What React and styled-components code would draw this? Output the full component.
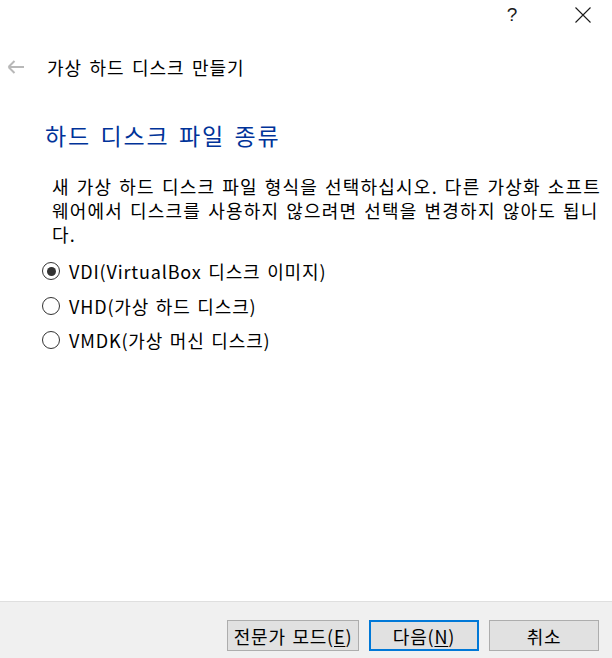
import React from "react";
import styled, { createGlobalStyle } from "styled-components";

const Global = createGlobalStyle`
  html, body { margin: 0; padding: 0; background: #ffffff; }
  body { font-family: "Noto Sans CJK KR", "Noto Sans", sans-serif; color: #000; }
`;

const Window = styled.div`
  width: 612px;
  height: 658px;
  display: flex;
  flex-direction: column;
  background: #ffffff;
  overflow: hidden;
`;

const TitleBar = styled.div`
  height: 30px;
  display: flex;
  justify-content: flex-end;
  align-items: center;
  gap: 41px;
  padding-right: 14px;
`;

const CaptionButton = styled.div`
  width: 30px;
  height: 30px;
  display: flex;
  align-items: center;
  justify-content: center;
  color: #1a1a1a;
  font-family: "Liberation Sans", sans-serif;
  font-size: 19px;
  font-weight: 300;
`;

const HeaderRow = styled.div`
  margin-top: 21px;
  height: 32px;
  display: flex;
  align-items: center;
  padding-left: 7px;
  gap: 22px;
`;

const HeaderText = styled.div`
  font-size: 18px;
  line-height: 32px;
  word-spacing: 0.15em;
  letter-spacing: 0.9px;
  color: #000;
`;

const Content = styled.div`
  display: flex;
  flex-direction: column;
  padding-left: 45px;
`;

const Title = styled.h1`
  margin: 37px 0 0 0;
  font-size: 23px;
  line-height: 30px;
  font-weight: 400;
  color: #003399;
  word-spacing: 0.1em;
  letter-spacing: 1.9px;
`;

const Description = styled.p`
  margin: 24px 0 0 7px;
  font-size: 18px;
  line-height: 24px;
  word-spacing: 0.1em;
  letter-spacing: 1.2px;
  white-space: nowrap;
`;

const Options = styled.div`
  margin-top: 8px;
  display: flex;
  flex-direction: column;
`;

const OptionRow = styled.label`
  height: 34.5px;
  display: flex;
  align-items: center;
  gap: 9px;
  font-size: 18px;
  word-spacing: 0.1em;
  letter-spacing: 0.85px;
`;

const RadioCircle = styled.span`
  width: 18px;
  height: 18px;
  box-sizing: border-box;
  border: 1px solid #333333;
  border-radius: 50%;
  display: flex;
  align-items: center;
  justify-content: center;
  background: #fff;
  margin-left: -3px;
  &::after {
    content: "";
    width: 9px;
    height: 9px;
    border-radius: 50%;
    background: ${(p) => (p.$checked ? "#333333" : "transparent")};
  }
`;

const Footer = styled.div`
  margin-top: auto;
  box-sizing: border-box;
  height: 57px;
  border-top: 1px solid #dfdfdf;
  background: #f0f0f0;
  display: flex;
  justify-content: flex-end;
  align-items: flex-start;
  gap: 10px;
  padding: 18px 13px 0 0;
`;

const Button = styled.button`
  width: ${(p) => p.$w}px;
  height: 31px;
  box-sizing: border-box;
  background: #e1e1e1;
  border: ${(p) => (p.$default ? "2px solid #0078d7" : "1px solid #adadad")};
  font-family: "Noto Sans CJK KR", sans-serif;
  font-size: 18px;
  letter-spacing: 0.8px;
  color: #000;
  padding: 0;
  display: flex;
  align-items: center;
  justify-content: center;
  word-spacing: 0.1em;
  u { text-decoration: underline; text-underline-offset: 2px; }
`;

const BackArrow = () => (
  <svg width="18" height="14" viewBox="0 0 18 14" fill="none">
    <path d="M1.5 7 H17 M1.5 7 L7.5 1 M1.5 7 L7.5 13" stroke="#b8b8b8" strokeWidth="2" />
  </svg>
);

const CloseIcon = () => (
  <svg width="16" height="16" viewBox="0 0 16 16" fill="none">
    <path d="M0.5 0.5 L15.5 15.5 M15.5 0.5 L0.5 15.5" stroke="#1a1a1a" strokeWidth="1.1" />
  </svg>
);

const options = [
  { label: "VDI(VirtualBox 디스크 이미지)", checked: true },
  { label: "VHD(가상 하드 디스크)", checked: false },
  { label: "VMDK(가상 머신 디스크)", checked: false },
];

export default function App() {
  return (
    <Window>
      <Global />
      <TitleBar>
        <CaptionButton>?</CaptionButton>
        <CaptionButton><CloseIcon /></CaptionButton>
      </TitleBar>
      <HeaderRow>
        <BackArrow />
        <HeaderText>가상 하드 디스크 만들기</HeaderText>
      </HeaderRow>
      <Content>
        <Title>하드 디스크 파일 종류</Title>
        <Description>
          새 가상 하드 디스크 파일 형식을 선택하십시오. 다른 가상화 소프트<br />
          웨어에서 디스크를 사용하지 않으려면 선택을 변경하지 않아도 됩니<br />
          다.
        </Description>
        <Options>
          {options.map((o) => (
            <OptionRow key={o.label}>
              <RadioCircle $checked={o.checked} />
              <span>{o.label}</span>
            </OptionRow>
          ))}
        </Options>
      </Content>
      <Footer>
        <Button $w={132}>전문가 모드(<u>E</u>)</Button>
        <Button $w={110} $default>다음(<u>N</u>)</Button>
        <Button $w={110}>취소</Button>
      </Footer>
    </Window>
  );
}
